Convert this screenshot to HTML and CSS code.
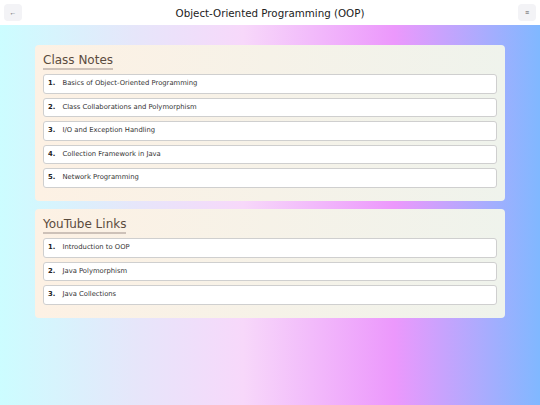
FILE: index.html
```html
<!DOCTYPE html>
<html lang="en">
<head>
  <meta charset="UTF-8" />
  <meta name="viewport" content="width=device-width, initial-scale=1.0"/>
  <title>Object-Oriented Programming (OOP)</title>
  <link rel="stylesheet" href="styles.css">
</head>
<body>
  <header class="topbar">
    <button class="icon-btn" aria-label="Back">&larr;</button>
    <h1>Object-Oriented Programming (OOP)</h1>
    <button class="icon-btn" aria-label="Menu">&equiv;</button>
  </header>

  <main class="content">
    <section class="card">
      <h2>Class Notes</h2>
      <ol class="list">
        <li><b>1.</b> Basics of Object-Oriented Programming</li>
        <li><b>2.</b> Class Collaborations and Polymorphism</li>
        <li><b>3.</b> I/O and Exception Handling</li>
        <li><b>4.</b> Collection Framework in Java</li>
        <li><b>5.</b> Network Programming</li>
      </ol>
    </section>

    <section class="card">
      <h2>YouTube Links</h2>
      <ol class="list">
        <li><b>1.</b> Introduction to OOP</li>
        <li><b>2.</b> Java Polymorphism</li>
        <li><b>3.</b> Java Collections</li>
      </ol>
    </section>
  </main>
</body>
</html>
```

FILE: styles.css
```css
html, body { height: 100%; }
body {
  margin: 0;
  font-family: "DejaVu Sans", Verdana, sans-serif;
  color: #333;
  background: linear-gradient(90deg, #ccfdff 0%, #e6e6fa 25%, #f7d8fa 45%, #ec98fc 73%, #80b8ff 100%);
}
.topbar {
  height: 25px;
  background: #fff;
  display: flex;
  align-items: center;
  justify-content: space-between;
  padding: 0 4px;
}
.topbar h1 {
  margin: 0;
  font-size: 10.3px;
  font-weight: normal;
  color: #222;
}
.icon-btn {
  width: 18px;
  height: 17px;
  padding: 0;
  border: none;
  border-radius: 4px;
  background: #f3f3f6;
  color: #555;
  font-size: 7px;
  line-height: 17px;
  cursor: pointer;
}
.content {
  margin: 20px 35px 0;
  display: flex;
  flex-direction: column;
  gap: 8px;
}
.card {
  background: linear-gradient(90deg, #fdf1e4, #eff3ec);
  border-radius: 4px;
  padding: 8px 8px 13.5px;
}
.card h2 {
  width: fit-content;
  margin: 0 0 4px;
  font-size: 12px;
  font-weight: normal;
  line-height: 15px;
  color: #5b4b3e;
  border-bottom: 2px solid #cdc1b8;
}
.list {
  list-style: none;
  margin: 0;
  padding: 0;
  display: flex;
  flex-direction: column;
  gap: 4px;
}
.list li {
  background: #fff;
  border: 1px solid #cfcfcf;
  border-radius: 3px;
  height: 17.5px;
  line-height: 17.5px;
  padding: 0 4px;
  font-size: 6.8px;
  color: #333;
}
.list b {
  color: #222;
  margin-right: 5px;
}
```
